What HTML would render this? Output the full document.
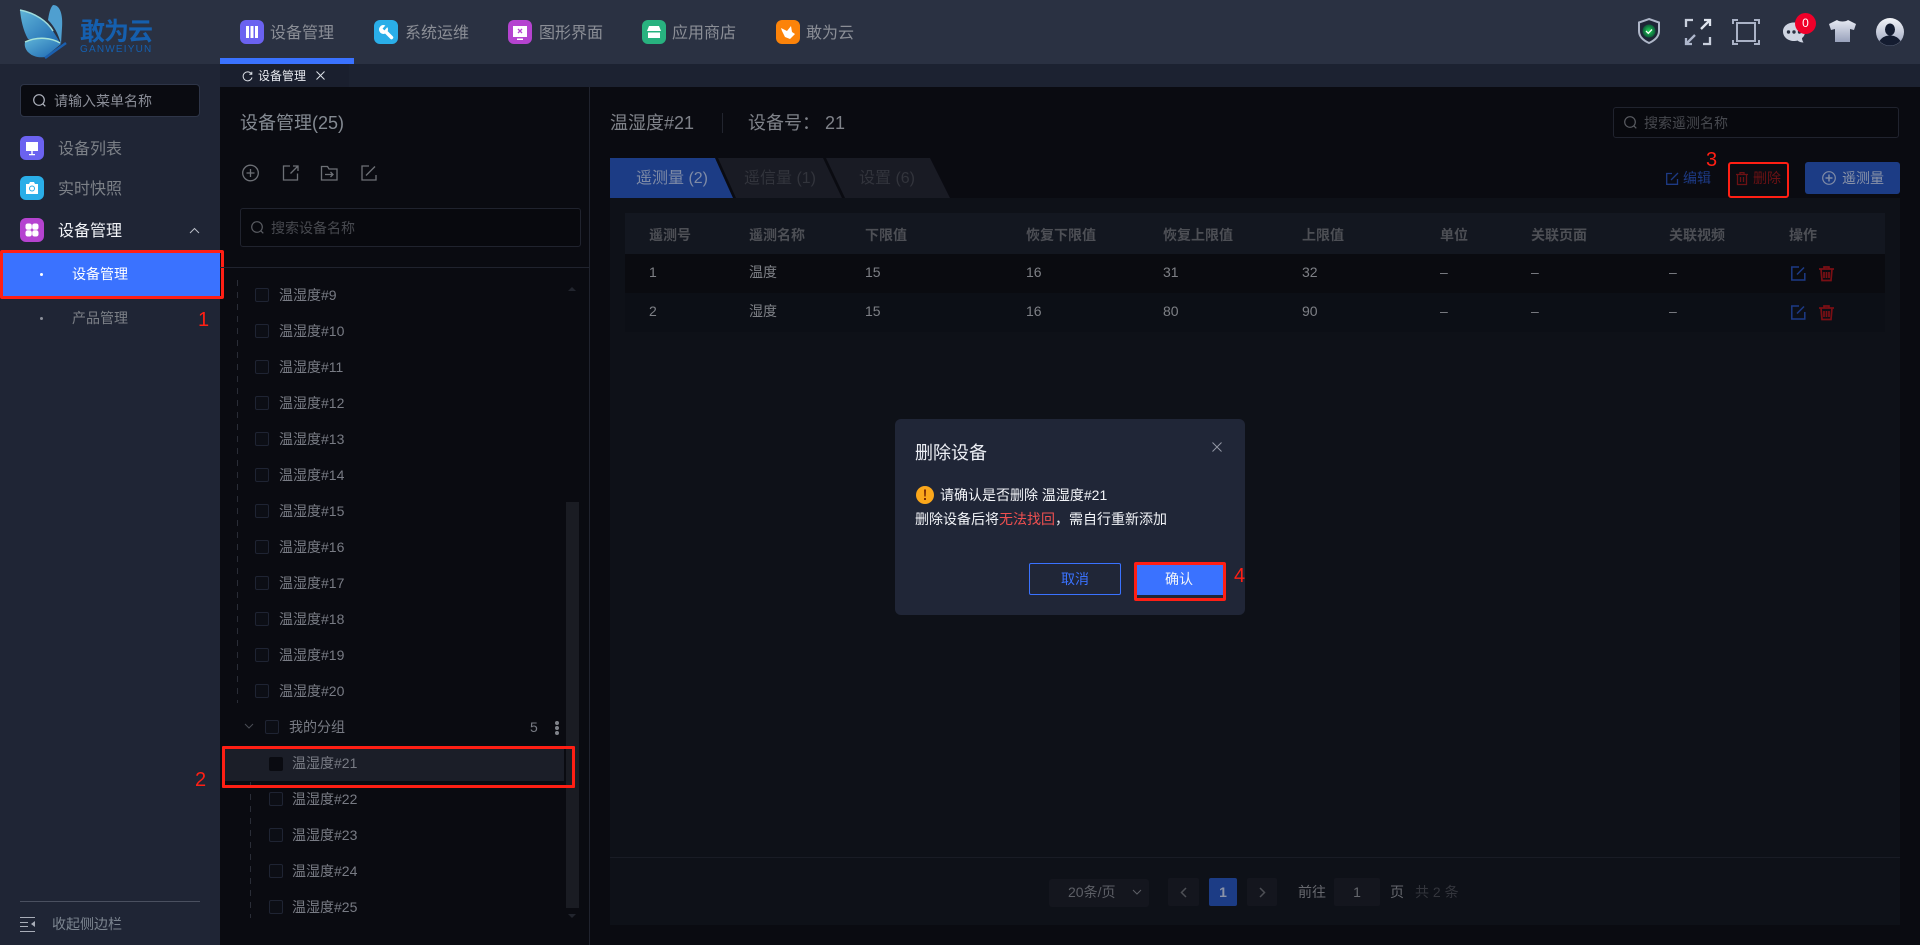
<!DOCTYPE html>
<html lang="zh"><head><meta charset="utf-8"><title>设备管理</title>
<style>
*{box-sizing:border-box;margin:0;padding:0}
html,body{width:1920px;height:945px;overflow:hidden;background:#0a0b11;font-family:"Liberation Sans","Noto Sans CJK SC",sans-serif;font-size:14px}
.a{position:absolute}
.t{position:absolute;white-space:nowrap;line-height:20px;height:20px}
svg{position:absolute;overflow:visible}
.ic{position:absolute;width:24px;height:24px;border-radius:6px}
.cb{position:absolute;width:14px;height:14px;border:1px solid #1f2433;border-radius:2px;background:#0c0e15}
.r{color:#7e8086}
.h{color:#4d4f55;font-weight:700}
.tr{color:#787b84}
.red{position:absolute;border:3px solid #ff1f14;border-radius:2px}
.n{color:#8b8e96;font-size:16px}
.red-t{position:absolute;color:#ff1f14;line-height:24px;font-size:20px}
.dash{position:absolute;width:1px;background:repeating-linear-gradient(to bottom,#2a2d37 0,#2a2d37 6px,transparent 6px,transparent 12px)}
</style></head><body>
<div class="a" style="left:0;top:0;width:1920px;height:64px;background:#2a3142"></div>
<div class="a" style="left:0;top:64px;width:220px;height:881px;background:#1f2535"></div>
<div class="a" style="left:220px;top:64px;width:1700px;height:23px;background:#1c2231"></div>

<!-- logo -->
<svg style="left:0;top:0" width="80" height="64" viewBox="0 0 80 64">
<defs>
<linearGradient id="g" x1="0" y1="0" x2="1" y2="1"><stop offset="0" stop-color="#5fb4d8"/><stop offset="1" stop-color="#1c66b0"/></linearGradient>
<radialGradient id="sg"><stop offset="0" stop-color="#1fd856"/><stop offset="1" stop-color="#0d5a3a"/></radialGradient>
<linearGradient id="sh" x1="0" y1="0" x2="0" y2="1"><stop offset="0" stop-color="#e6e9f2"/><stop offset="1" stop-color="#98a1bb"/></linearGradient>
<linearGradient id="av" x1="0" y1="0" x2="0" y2="1"><stop offset="0" stop-color="#f2f4f8"/><stop offset="1" stop-color="#9aa3bd"/></linearGradient>
</defs>
<path d="M53 5C60 5 63 14 62 28L61 44C58 33 54 26 48 20C49 14 50 8 53 5Z" fill="#4f9fd0"/>
<path d="M20 10C35 13 47 21 53 31L61 44L28 39C23 30 21 20 20 10Z" fill="url(#g)"/>
<path d="M20 10C35 13 47 21 53 31" fill="none" stroke="#9fdcdc" stroke-width="1.500"/>
<path d="M25 42C38 36 52 38 61 44L45 57C33 59 23 51 25 42Z" fill="url(#g)"/>
<path d="M25 42C38 36 52 38 60 43" fill="none" stroke="#a8e4d8" stroke-width="1.500"/>
<path d="M45 58L66 43" stroke="#1b5fae" stroke-width="2.500"/>
</svg>
<div class="t" style="left:80px;top:18px;font-size:25px;line-height:28px;height:28px;color:#155fae;letter-spacing:-1px;font-weight:700">敢为云</div>
<div class="t" style="left:80px;top:44px;font-size:10px;line-height:12px;height:12px;color:#155fae;letter-spacing:1.200px">GANWEIYUN</div>

<!-- nav -->
<div class="a" style="left:220px;top:58px;width:134px;height:6px;background:#3a72ff"></div>
<div class="ic" style="left:240px;top:20px;background:#6b62f0"></div>
<svg style="left:240px;top:20px" width="24" height="24"><path d="M6 6h3v12H6zM10.500 6h3v12h-3zM15 6h3v12h-3z" fill="#fff"/></svg>
<div class="t n" style="left:270px;top:24px">设备管理</div>
<div class="ic" style="left:374px;top:20px;background:#2aaee8"></div>
<svg style="left:374px;top:20px" width="24" height="24"><circle cx="9.500" cy="9.500" r="4.500" fill="#fff"/><path d="M11 11l6.500 6.500" stroke="#fff" stroke-width="3.500" stroke-linecap="round"/><path d="M9.500 9.500l4-4.500" stroke="#2aaee8" stroke-width="2.500"/></svg>
<div class="t n" style="left:405px;top:24px">系统运维</div>
<div class="ic" style="left:508px;top:20px;background:#b543d0"></div>
<svg style="left:508px;top:20px" width="24" height="24"><path d="M5 6h14v11H5zM9 18.500h6v1.500H9z" fill="#fff"/><path d="M10 9l4 4M14 9l-4 4" stroke="#b543d0" stroke-width="1.300"/></svg>
<div class="t n" style="left:539px;top:24px">图形界面</div>
<div class="ic" style="left:642px;top:20px;background:#28b27f"></div>
<svg style="left:642px;top:20px" width="24" height="24"><path d="M7 6h10l2 5H5zM6 12.500h12V18H6z" fill="#fff"/><path d="M6 11.500h12" stroke="#28b27f"/></svg>
<div class="t n" style="left:672px;top:24px">应用商店</div>
<div class="ic" style="left:776px;top:20px;background:#fc8309"></div>
<svg style="left:776px;top:20px" width="24" height="24"><path d="M5 8l6 3 4-5 1 6 3 2-5 5-5-2-3-6Z" fill="#fff"/></svg>
<div class="t n" style="left:806px;top:24px">敢为云</div>

<!-- header right -->
<svg style="left:1637px;top:18px" width="24" height="26" viewBox="0 0 24 26"><path d="M12 1l10 3.500v8.500c0 6-4.500 9.500-10 12C6.500 22.500 2 19 2 13V4.500Z" fill="#1e2536" stroke="#aeb6c8" stroke-width="2"/><circle cx="12" cy="13" r="6.500" fill="url(#sg)"/><path d="M9 13l2.300 2.300 3.700-3.800" fill="none" stroke="#fff" stroke-width="1.300"/></svg>
<svg style="left:1685px;top:19px" width="26" height="26" viewBox="0 0 26 26" fill="none" stroke="#dfe4ee" stroke-width="2.300"><path d="M1 8V1h7M25 18v7h-7" stroke="#c8cfdc"/><path d="M16 10L25 1M25 7V1h-6"/><path d="M10 16L1 25M1 19v6h6" stroke="#aeb7cc"/></svg>
<svg style="left:1733px;top:19px" width="26" height="26" viewBox="0 0 26 26" fill="none" stroke="#aab2c6" stroke-width="2"><path d="M4 4h18v18H4z"/><path d="M0 5V1h5M21 1h5v4M26 21v4h-5M5 25H0v-4"/></svg>
<svg style="left:1783px;top:21px" width="24" height="24" viewBox="0 0 24 24"><path d="M11 1.500c6 0 11 4 11 9s-3 6.500-3 6.500c0 1.500.5 3 1.500 4.500-2.500 0-4.500-.7-6-2-1 .3-2.300.5-3.500.5C5 20 0 16 0 10.500s5-9 11-9Z" fill="#cfd5e2"/><circle cx="5.500" cy="11" r="1.700" fill="#2a3142"/><circle cx="11" cy="11" r="1.700" fill="#2a3142"/><circle cx="16.500" cy="11" r="1.700" fill="#2a3142"/></svg>
<div class="a" style="left:1795px;top:13px;width:21px;height:21px;border-radius:50%;background:#f0002a;color:#fff;text-align:center;font-size:12px;line-height:21px">0</div>
<svg style="left:1829px;top:19px" width="27" height="24" viewBox="0 0 27 24"><path d="M8 1c2 2 9 2 11 0l8 4-2 6-4-1v13H6V10l-4 1-2-6Z" fill="url(#sh)"/></svg>
<svg style="left:1876px;top:18px" width="28" height="28" viewBox="0 0 28 28"><circle cx="14" cy="14" r="14" fill="url(#av)"/><ellipse cx="14" cy="11.500" rx="5" ry="6" fill="#141c30"/><path d="M3.500 23c3-4.500 7-5.500 10.500-5.500s7.500 1 10.500 5.500a14 14 0 0 1-21 0Z" fill="#141c30"/></svg>

<!-- tab bar -->
<div class="a" style="left:220px;top:64px;width:129px;height:23px;background:#1a1f2e"></div>
<svg style="left:242px;top:71px" width="11" height="11" viewBox="0 0 11 11" fill="none" stroke="#dfe3ea" stroke-width="1"><path d="M9.500 3A4.500 4.500 0 1 0 10 6.500M9.800 .8V3.300H7.300"/></svg>
<div class="t" style="left:258px;top:66px;font-size:12px;color:#e8eaf0">设备管理</div>
<svg style="left:316px;top:71px" width="9" height="9" stroke="#dfe3ea"><path d="M.5 .5l8 8M8.500 .5l-8 8"/></svg>

<!-- sidebar -->
<div class="a" style="left:20px;top:84px;width:180px;height:33px;background:#0a0b11;border:1px solid #2e3548;border-radius:4px"></div>
<svg style="left:33px;top:94px" width="13" height="13" fill="none" stroke="#b0b4bf" stroke-width="1.200"><circle cx="6" cy="6" r="5.300"/><path d="M9.800 9.800l2.500 2.500"/></svg>
<div class="t" style="left:54px;top:91px;font-size:14px;color:#8b8e98">请输入菜单名称</div>

<div class="ic" style="left:20px;top:136px;background:#6b62f0"></div>
<svg style="left:20px;top:136px" width="24" height="24"><path d="M6 6h12v9H6zM9 18h6v1.200H9zM11.300 15h1.400v3h-1.400z" fill="#fff"/></svg>
<div class="t" style="left:58px;top:140px;font-size:16px;color:#7c8087">设备列表</div>
<div class="ic" style="left:20px;top:176px;background:#2aaee8"></div>
<svg style="left:20px;top:176px" width="24" height="24"><path d="M6 8h3l1-2h4l1 2h3v10H6z" fill="#fff"/><circle cx="12" cy="12.500" r="2.500" fill="none" stroke="#2aaee8"/></svg>
<div class="t" style="left:58px;top:180px;font-size:16px;color:#7c8087">实时快照</div>
<div class="ic" style="left:20px;top:218px;background:#b543d0"></div>
<svg style="left:20px;top:218px" width="24" height="24" fill="#fff"><rect x="5.500" y="5.500" width="6.300" height="6.300" rx="2.200"/><rect x="12.200" y="5.500" width="6.300" height="6.300" rx="2.200"/><rect x="5.500" y="12.200" width="6.300" height="6.300" rx="2.200"/><rect x="12.200" y="12.200" width="6.300" height="6.300" rx="2.200"/></svg>
<div class="t" style="left:58px;top:222px;font-size:16px;color:#f2f4f8">设备管理</div>
<svg style="left:189px;top:227px" width="11" height="7" fill="none" stroke="#b8bcc6"><path d="M1 6l4.500-4.500L10 6"/></svg>

<div class="a" style="left:0;top:253px;width:220px;height:43px;background:#3a72ff"></div>
<div class="a" style="left:40px;top:273px;width:3px;height:3px;border-radius:50%;background:#fff"></div>
<div class="t" style="left:72px;top:264px;color:#fff">设备管理</div>
<div class="red" style="left:0;top:250px;width:224px;height:49px"></div>
<div class="a" style="left:40px;top:317px;width:3px;height:3px;border-radius:50%;background:#8a8e98"></div>
<div class="t" style="left:72px;top:308px;color:#7c8087">产品管理</div>
<div class="red-t" style="left:198px;top:308px">1</div>

<div class="a" style="left:20px;top:901px;width:180px;height:1px;background:#4a5060"></div>
<svg style="left:20px;top:917px" width="16" height="15" stroke="#a8adb8" fill="none"><path d="M0 .5h15M0 14.500h15M0 5.500h8M0 9.500h8"/><path d="M15 4v6l-4-3Z" fill="#a8adb8" stroke="none"/></svg>
<div class="t" style="left:52px;top:914px;color:#7c8590">收起侧边栏</div>

<!-- tree col -->
<div class="a" style="left:589px;top:87px;width:1px;height:858px;background:#20232e"></div>
<div class="a" style="left:220px;top:267px;width:369px;height:1px;background:#20232e"></div>
<div class="t" style="left:240px;top:113px;font-size:18px;color:#848a92">设备管理(25)</div>
<svg style="left:242px;top:164px" width="130" height="18" fill="none" stroke="#6d7076" stroke-width="1.300">
<circle cx="8.500" cy="9" r="7.800"/><path d="M8.500 5v8M4.500 9h8"/>
<path d="M48 2h-6.500v14h14V9.500M48.500 9.500L55.500 2.500M51 2h5v5"/>
<path d="M79.500 2.500h6l1.500 2.500h8v11h-15.500zM83 10.500h8M88.500 8l2.500 2.500-2.500 2.500"/>
<path d="M127 2h-7v14h14V11M124 11.500L133 2.500"/>
</svg>
<div class="a" style="left:240px;top:208px;width:341px;height:39px;background:#08090e;border:1px solid #20232e;border-radius:3px"></div>
<svg style="left:251px;top:221px" width="13" height="13" fill="none" stroke="#5a5c62" stroke-width="1.200"><circle cx="6" cy="6" r="5.300"/><path d="M9.800 9.800l2.500 2.500"/></svg>
<div class="t" style="left:271px;top:218px;color:#47494f">搜索设备名称</div>

<div class="dash" style="left:237px;top:280px;height:423px"></div>
<div class="dash" style="left:250px;top:782px;height:136px"></div>

<div class="cb" style="left:255px;top:288px"></div><div class="t tr" style="left:279px;top:285px">温湿度#9</div>
<div class="cb" style="left:255px;top:324px"></div><div class="t tr" style="left:279px;top:321px">温湿度#10</div>
<div class="cb" style="left:255px;top:360px"></div><div class="t tr" style="left:279px;top:357px">温湿度#11</div>
<div class="cb" style="left:255px;top:396px"></div><div class="t tr" style="left:279px;top:393px">温湿度#12</div>
<div class="cb" style="left:255px;top:432px"></div><div class="t tr" style="left:279px;top:429px">温湿度#13</div>
<div class="cb" style="left:255px;top:468px"></div><div class="t tr" style="left:279px;top:465px">温湿度#14</div>
<div class="cb" style="left:255px;top:504px"></div><div class="t tr" style="left:279px;top:501px">温湿度#15</div>
<div class="cb" style="left:255px;top:540px"></div><div class="t tr" style="left:279px;top:537px">温湿度#16</div>
<div class="cb" style="left:255px;top:576px"></div><div class="t tr" style="left:279px;top:573px">温湿度#17</div>
<div class="cb" style="left:255px;top:612px"></div><div class="t tr" style="left:279px;top:609px">温湿度#18</div>
<div class="cb" style="left:255px;top:648px"></div><div class="t tr" style="left:279px;top:645px">温湿度#19</div>
<div class="cb" style="left:255px;top:684px"></div><div class="t tr" style="left:279px;top:681px">温湿度#20</div>

<svg style="left:244px;top:723px" width="10" height="7" fill="none" stroke="#4a4d55"><path d="M1 1l4 4 4-4"/></svg>
<div class="cb" style="left:265px;top:720px"></div><div class="t tr" style="left:289px;top:717px">我的分组</div>
<div class="t tr" style="left:530px;top:717px">5</div>
<div class="a" style="left:555px;top:721px;width:4px;height:4px;border-radius:50%;background:#80838a"></div>
<div class="a" style="left:555px;top:726px;width:4px;height:4px;border-radius:50%;background:#80838a"></div>
<div class="a" style="left:555px;top:731px;width:4px;height:4px;border-radius:50%;background:#80838a"></div>

<div class="a" style="left:222px;top:748px;width:342px;height:33px;background:#1b1e28"></div>
<div class="cb" style="left:269px;top:757px;background:#0a0b11;border-color:#0a0b11"></div><div class="t tr" style="left:292px;top:753px">温湿度#21</div>
<div class="cb" style="left:269px;top:792px"></div><div class="t tr" style="left:292px;top:789px">温湿度#22</div>
<div class="cb" style="left:269px;top:828px"></div><div class="t tr" style="left:292px;top:825px">温湿度#23</div>
<div class="cb" style="left:269px;top:864px"></div><div class="t tr" style="left:292px;top:861px">温湿度#24</div>
<div class="cb" style="left:269px;top:900px"></div><div class="t tr" style="left:292px;top:897px">温湿度#25</div>

<div class="a" style="left:566px;top:502px;width:13px;height:406px;background:#1a1c23"></div>
<svg style="left:568px;top:286px" width="8" height="5"><path d="M0 5l4-4 4 4Z" fill="#22252e"/></svg>
<svg style="left:568px;top:914px" width="8" height="5"><path d="M0 0l4 4 4-4Z" fill="#22252e"/></svg>

<div class="red" style="left:222px;top:746px;width:353px;height:42px;border-radius:1px"></div>
<div class="red-t" style="left:195px;top:768px">2</div>

<!-- right header -->
<div class="t" style="left:610px;top:113px;font-size:18px;color:#7f8289">温湿度#21</div>
<div class="a" style="left:722px;top:113px;width:1px;height:20px;background:#22252f"></div>
<div class="t" style="left:748px;top:113px;font-size:18px;color:#7f8289">设备号：</div>
<div class="t" style="left:825px;top:113px;font-size:18px;color:#7f8289">21</div>
<div class="a" style="left:1613px;top:107px;width:286px;height:31px;background:#08090e;border:1px solid #20232e;border-radius:3px"></div>
<svg style="left:1624px;top:116px" width="13" height="13" fill="none" stroke="#5a5c62" stroke-width="1.200"><circle cx="6" cy="6" r="5.300"/><path d="M9.800 9.800l2.500 2.500"/></svg>
<div class="t" style="left:1644px;top:113px;color:#47494f">搜索遥测名称</div>

<!-- tabs -->
<svg style="left:0;top:0;pointer-events:none" width="1000" height="200">
<path d="M610 158H715L733 198H610Z" fill="#1c3c85"/>
<path d="M718 158H823L842 198H736Z" fill="#191b24"/>
<path d="M826 158H930L950 198H845Z" fill="#191b24"/>
</svg>
<div class="t" style="left:636px;top:169px;font-size:16px;color:#7f8ba6">遥测量 (2)</div>
<div class="t" style="left:744px;top:169px;font-size:16px;color:#32343c">遥信量 (1)</div>
<div class="t" style="left:859px;top:169px;font-size:16px;color:#32343c">设置 (6)</div>

<!-- actions -->
<svg style="left:1666px;top:172px" width="13" height="13" fill="none" stroke="#1d3a85" stroke-width="1.300"><path d="M6 1.500H.7v10.800h10.800V7M5 8l7-7"/></svg>
<div class="t" style="left:1683px;top:168px;color:#1d3a85">编辑</div>
<svg style="left:1736px;top:172px" width="12" height="13" fill="none" stroke="#6b1114" stroke-width="1.300"><path d="M0 2.500h12M4 2.500V.7h4v1.800M1.500 2.500v10h9v-10M4.500 5v5M7.500 5v5"/></svg>
<div class="t" style="left:1753px;top:168px;color:#6b1114">删除</div>
<div class="red" style="left:1728px;top:162px;width:61px;height:36px;border-radius:3px;border-width:2px"></div>
<div class="red-t" style="left:1706px;top:148px">3</div>
<div class="a" style="left:1805px;top:162px;width:95px;height:32px;background:#1c3c85;border-radius:3px"></div>
<svg style="left:1822px;top:171px" width="14" height="14" fill="none" stroke="#7f8ba6" stroke-width="1.200"><circle cx="7" cy="7" r="6.300"/><path d="M7 3.500v7M3.500 7h7" stroke-width="1.500"/></svg>
<div class="t" style="left:1842px;top:168px;color:#8a93a8">遥测量</div>

<!-- table panel -->
<div class="a" style="left:610px;top:198px;width:1290px;height:727px;background:#0e1118"></div>
<div class="a" style="left:625px;top:213px;width:1260px;height:41px;background:#131720"></div>
<div class="a" style="left:625px;top:254px;width:1260px;height:39px;background:#0a0b10"></div>
<div class="a" style="left:625px;top:293px;width:1260px;height:39px;background:#0c0f16"></div>

<div class="t h" style="left:649px;top:225px">遥测号</div>
<div class="t h" style="left:749px;top:225px">遥测名称</div>
<div class="t h" style="left:865px;top:225px">下限值</div>
<div class="t h" style="left:1026px;top:225px">恢复下限值</div>
<div class="t h" style="left:1163px;top:225px">恢复上限值</div>
<div class="t h" style="left:1302px;top:225px">上限值</div>
<div class="t h" style="left:1440px;top:225px">单位</div>
<div class="t h" style="left:1531px;top:225px">关联页面</div>
<div class="t h" style="left:1669px;top:225px">关联视频</div>
<div class="t h" style="left:1789px;top:225px">操作</div>

<div class="t r" style="left:649px;top:262px">1</div>
<div class="t r" style="left:749px;top:262px">温度</div>
<div class="t r" style="left:865px;top:262px">15</div>
<div class="t r" style="left:1026px;top:262px">16</div>
<div class="t r" style="left:1163px;top:262px">31</div>
<div class="t r" style="left:1302px;top:262px">32</div>
<div class="t r" style="left:1440px;top:262px">–</div>
<div class="t r" style="left:1531px;top:262px">–</div>
<div class="t r" style="left:1669px;top:262px">–</div>

<div class="t r" style="left:649px;top:301px">2</div>
<div class="t r" style="left:749px;top:301px">湿度</div>
<div class="t r" style="left:865px;top:301px">15</div>
<div class="t r" style="left:1026px;top:301px">16</div>
<div class="t r" style="left:1163px;top:301px">80</div>
<div class="t r" style="left:1302px;top:301px">90</div>
<div class="t r" style="left:1440px;top:301px">–</div>
<div class="t r" style="left:1531px;top:301px">–</div>
<div class="t r" style="left:1669px;top:301px">–</div>

<svg style="left:1791px;top:266px" width="44" height="15" fill="none" stroke-width="1.500">
<path d="M8 1H.8v13h13V7M6 8.500l7-7" stroke="#1d3a85"/>
<path d="M28 3h15M33 3V1h5v2M30 3l1 11.500h9L41 3M33 6v6M35.500 6v6M38 6v6" stroke="#7a0f14" stroke-width="1.700"/>
</svg>
<svg style="left:1791px;top:305px" width="44" height="15" fill="none" stroke-width="1.500">
<path d="M8 1H.8v13h13V7M6 8.500l7-7" stroke="#1d3a85"/>
<path d="M28 3h15M33 3V1h5v2M30 3l1 11.500h9L41 3M33 6v6M35.500 6v6M38 6v6" stroke="#7a0f14" stroke-width="1.700"/>
</svg>

<!-- pagination -->
<div class="a" style="left:610px;top:857px;width:1290px;height:1px;background:#191c25"></div>
<div class="a" style="left:1049px;top:879px;width:100px;height:28px;background:#14161e;border-radius:3px"></div>
<div class="t" style="left:1068px;top:882px;color:#5d5f66">20条/页</div>
<svg style="left:1132px;top:889px" width="10" height="7" fill="none" stroke="#5d5f66"><path d="M1 1l4 4 4-4"/></svg>
<div class="a" style="left:1168px;top:878px;width:31px;height:28px;background:#14161e;border-radius:2px"></div>
<svg style="left:1180px;top:887px" width="7" height="11" fill="none" stroke="#4d4f55" stroke-width="1.500"><path d="M6 1L1.500 5.500 6 10"/></svg>
<div class="a" style="left:1209px;top:878px;width:28px;height:28px;background:#1c3c85;border-radius:2px;color:#8a93a8;text-align:center;line-height:28px;font-weight:700">1</div>
<div class="a" style="left:1247px;top:878px;width:30px;height:28px;background:#14161e;border-radius:2px"></div>
<svg style="left:1259px;top:887px" width="7" height="11" fill="none" stroke="#4d4f55" stroke-width="1.500"><path d="M1 1l4.500 4.500L1 10"/></svg>
<div class="t" style="left:1298px;top:882px;color:#66686e">前往</div>
<div class="a" style="left:1334px;top:878px;width:46px;height:28px;background:#14161e;border-radius:2px;color:#66686e;text-align:center;line-height:28px">1</div>
<div class="t" style="left:1390px;top:882px;color:#66686e">页</div>
<div class="t" style="left:1415px;top:882px;color:#33353c">共 2 条</div>

<!-- dialog -->
<div class="a" style="left:895px;top:419px;width:350px;height:196px;background:#202637;border-radius:6px"></div>
<div class="t" style="left:915px;top:443px;font-size:18px;color:#eceef4">删除设备</div>
<svg style="left:1212px;top:442px" width="10" height="10" stroke="#9297a4"><path d="M.5 .5l9 9M9.500 .5l-9 9"/></svg>
<svg style="left:916px;top:486px" width="18" height="18"><circle cx="9" cy="9" r="9" fill="#fba71b"/><path d="M8 3.500h2l-.3 7H8.300zM8 12h2v2H8z" fill="#7a2a05"/></svg>
<div class="t" style="left:940px;top:485px;color:#f2f4f8">请确认是否删除 温湿度#21</div>
<div class="t" style="left:915px;top:509px;color:#f2f4f8">删除设备后将<span style="color:#f05050">无法找回</span>，需自行重新添加</div>
<div class="a" style="left:1029px;top:563px;width:92px;height:32px;border:1px solid #3a72ff;border-radius:2px;color:#3a72ff;text-align:center;line-height:30px">取消</div>
<div class="a" style="left:1134px;top:564px;width:90px;height:31px;background:#3a72ff;color:#f2f4f8;text-align:center;line-height:31px">确认</div>
<div class="red" style="left:1134px;top:562px;width:92px;height:39px"></div>
<div class="red-t" style="left:1234px;top:564px">4</div>
</body></html>
